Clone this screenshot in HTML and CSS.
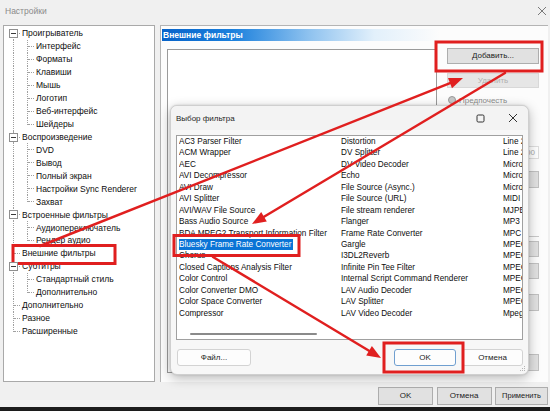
FILE: index.html
```html
<!DOCTYPE html>
<html lang="ru">
<head>
<meta charset="utf-8">
<title>Настройки</title>
<link rel="stylesheet" href="styles.css">
</head>
<body>
<div class="win">
  <div class="titlebar">
    <span class="title">Настройки</span>
    <svg class="wclose" width="10" height="10" viewBox="0 0 10 10"><path d="M1 1L9 9M9 1L1 9" stroke="#7a7a7a" stroke-width="1"/></svg>
  </div>

  <div class="main">
    <div class="tree">
      <div class="r"><span class="c first"><i class="box"></i></span><span class="t">Проигрыватель</span></div>
      <div class="r"><span class="c"></span><span class="c tee"></span><span class="t">Интерфейс</span></div>
      <div class="r"><span class="c"></span><span class="c tee"></span><span class="t">Форматы</span></div>
      <div class="r"><span class="c"></span><span class="c tee"></span><span class="t">Клавиши</span></div>
      <div class="r"><span class="c"></span><span class="c tee"></span><span class="t">Мышь</span></div>
      <div class="r"><span class="c"></span><span class="c tee"></span><span class="t">Логотип</span></div>
      <div class="r"><span class="c"></span><span class="c tee"></span><span class="t">Веб-интерфейс</span></div>
      <div class="r"><span class="c"></span><span class="c end"></span><span class="t">Шейдеры</span></div>
      <div class="r"><span class="c tee"><i class="box"></i></span><span class="t">Воспроизведение</span></div>
      <div class="r"><span class="c"></span><span class="c tee"></span><span class="t">DVD</span></div>
      <div class="r"><span class="c"></span><span class="c tee"></span><span class="t">Вывод</span></div>
      <div class="r"><span class="c"></span><span class="c tee"></span><span class="t">Полный экран</span></div>
      <div class="r"><span class="c"></span><span class="c tee"></span><span class="t">Настройки Sync Renderer</span></div>
      <div class="r"><span class="c"></span><span class="c end"></span><span class="t">Захват</span></div>
      <div class="r"><span class="c tee"><i class="box"></i></span><span class="t">Встроенные фильтры</span></div>
      <div class="r"><span class="c"></span><span class="c tee"></span><span class="t">Аудиопереключатель</span></div>
      <div class="r"><span class="c"></span><span class="c end"></span><span class="t">Рендер аудио</span></div>
      <div class="r"><span class="c tee"></span><span class="t">Внешние фильтры</span></div>
      <div class="r"><span class="c tee"><i class="box"></i></span><span class="t">Субтитры</span></div>
      <div class="r"><span class="c"></span><span class="c tee"></span><span class="t">Стандартный стиль</span></div>
      <div class="r"><span class="c"></span><span class="c end"></span><span class="t">Дополнительно</span></div>
      <div class="r"><span class="c tee"></span><span class="t">Дополнительно</span></div>
      <div class="r"><span class="c tee"></span><span class="t">Разное</span></div>
      <div class="r"><span class="c end"></span><span class="t">Расширенные</span></div>
    </div>

    <div class="page">
      <div class="caption">Внешние фильтры</div>
      <div class="content">
        <div class="filters"></div>
        <div class="side">
          <div class="btn add">Добавить...</div>
          <div class="btn dis">Удалить</div>
          <div class="radio"><i class="dot"></i><span>Предпочесть</span></div>
          <div class="field">00</div>
          <div class="btn s1"></div>
          <div class="hline"></div>
          <div class="btn s2"></div>
          <div class="btn s3"></div>
          <div class="btn s4"></div>
          <div class="btn s5"></div>
        </div>
      </div>
    </div>
  </div>

  <div class="footer">
    <div class="fbtn ok">OK</div>
    <div class="fbtn cancel">Отмена</div>
    <div class="fbtn apply">Применить</div>
  </div>
  <div class="taskbar"></div>

  <div class="dialog">
    <div class="dtitle">
      <span class="dtext">Выбор фильтра</span>
      <svg class="dmax" width="9" height="9" viewBox="0 0 9 9"><rect x="1" y="1" width="7" height="7" rx="1.2" fill="none" stroke="#333" stroke-width="1"/></svg>
      <svg class="dclose" width="10" height="10" viewBox="0 0 10 10"><path d="M1 1L9 9M9 1L1 9" stroke="#333" stroke-width="1"/></svg>
    </div>
    <div class="dbody">
      <div class="list">
        <div class="grid">
          <span>AC3 Parser Filter</span>
          <span>ACM Wrapper</span>
          <span>AEC</span>
          <span>AVI Decompressor</span>
          <span>AVI Draw</span>
          <span>AVI Splitter</span>
          <span>AVI/WAV File Source</span>
          <span>Bass Audio Source</span>
          <span>BDA MPEG2 Transport Information Filter</span>
          <span><b class="sel">Bluesky Frame Rate Converter</b></span>
          <span>Chorus</span>
          <span>Closed Captions Analysis Filter</span>
          <span>Color Control</span>
          <span>Color Converter DMO</span>
          <span>Color Space Converter</span>
          <span>Compressor</span>
          <span>Distortion</span>
          <span>DV Splitter</span>
          <span>DV Video Decoder</span>
          <span>Echo</span>
          <span>File Source (Async.)</span>
          <span>File Source (URL)</span>
          <span>File stream renderer</span>
          <span>Flanger</span>
          <span>Frame Rate Converter</span>
          <span>Gargle</span>
          <span>I3DL2Reverb</span>
          <span>Infinite Pin Tee Filter</span>
          <span>Internal Script Command Renderer</span>
          <span>LAV Audio Decoder</span>
          <span>LAV Splitter</span>
          <span>LAV Video Decoder</span>
          <span>Line 21</span>
          <span>Line 21</span>
          <span>Micro</span>
          <span>Micro</span>
          <span>Micro</span>
          <span>MIDI</span>
          <span>MJPE</span>
          <span>MP3</span>
          <span>MPC</span>
          <span>MPEG</span>
          <span>MPEG</span>
          <span>MPEG</span>
          <span>MPEG</span>
          <span>MPEG</span>
          <span>MPEG</span>
          <span>Mpeg</span>
        </div>
        <div class="hscroll"><i class="thumb"></i></div>
      </div>
      <div class="dbtns">
        <div class="dbtn file">Файл...</div>
        <div class="spacer"></div>
        <div class="dbtn dok">OK</div>
        <div class="dbtn dcancel">Отмена</div>
      </div>
    </div>
    <svg class="grip" width="7" height="7" viewBox="0 0 7 7"><g fill="#b5b5b5"><rect x="5" y="1" width="1" height="1"/><rect x="3" y="3" width="1" height="1"/><rect x="5" y="3" width="1" height="1"/><rect x="1" y="5" width="1" height="1"/><rect x="3" y="5" width="1" height="1"/><rect x="5" y="5" width="1" height="1"/></g></svg>
  </div>

  <svg class="marks" width="550" height="411" viewBox="0 0 550 411">
    <g fill="none" stroke="#e01f1f" stroke-width="3">
      <rect x="13" y="245.5" width="102" height="18"/>
      <rect x="436" y="42" width="106" height="29"/>
      <rect x="174" y="235.5" width="125" height="20"/>
      <rect x="384" y="343" width="79" height="29"/>
    </g>
    <g stroke="#e01f1f" stroke-width="2.5" stroke-linecap="round">
      <line x1="40" y1="246" x2="450" y2="83.2"/>
      <line x1="505" y1="73" x2="264" y2="216.8"/>
      <line x1="213" y1="257" x2="369" y2="350.7"/>
    </g>
    <g fill="#e01f1f">
      <polygon points="463,78 452,88.3 448,78.1"/>
      <polygon points="252,224 266.8,221.5 261.2,212.1"/>
      <polygon points="381,358 371.9,346 366.2,355.4"/>
    </g>
  </svg>
</div>
</body>
</html>
```

FILE: styles.css
```css
* { box-sizing: border-box; }
html, body { margin: 0; padding: 0; }
body {
  width: 550px;
  height: 411px;
  overflow: hidden;
  background: #f0f0f0;
  font-family: "Liberation Sans", Arial, sans-serif;
  color: #111;
}
.win {
  position: relative;
  width: 550px;
  height: 411px;
  display: flex;
  flex-direction: column;
}
.titlebar {
  height: 25px;
  display: flex;
  align-items: center;
  justify-content: space-between;
  padding: 0 3px 4px 5px;
}
.title { font-size: 8.5px; color: #8a8a8a; }
.wclose { display: block; }

.main {
  height: 357px;
  display: flex;
  gap: 5px;
  padding: 0 2px 0 3px;
}
.tree {
  width: 152px;
  flex: none;
  background: #fff;
  border: 1px solid #a9a9a9;
  padding: 1px 0 0 2px;
  font-size: 8.5px;
  color: #0d0d0d;
}
.r {
  display: flex;
  align-items: center;
  height: 12.95px;
  white-space: nowrap;
}
.t { margin-left: 2px; line-height: 12px; }
.c {
  position: relative;
  width: 14px;
  height: 100%;
  flex: none;
}
.c::before {
  content: "";
  position: absolute;
  left: 7px;
  top: 0;
  bottom: 0;
  border-left: 1px dotted #a0a0a0;
}
.c.first::before { top: 6px; }
.c.end::before { bottom: 6px; }
.c.tee::after, .c.end::after, .c.first::after {
  content: "";
  position: absolute;
  left: 8px;
  right: 0;
  top: 6px;
  border-top: 1px dotted #a0a0a0;
}
.box {
  position: absolute;
  left: 3px;
  top: 2px;
  width: 9px;
  height: 9px;
  border: 1px solid #8f8f8f;
  background: #fff;
  z-index: 1;
}
.box::after {
  content: "";
  position: absolute;
  left: 1px;
  right: 1px;
  top: 3px;
  border-top: 1px solid #3a3a3a;
}

.page {
  flex: 1;
  background: #fcfcfc;
  border-top: 1px solid #b4b4b4;
  border-left: 1px solid #b4b4b4;
  padding-top: 3px;
}
.caption {
  margin-left: 1px;
  height: 12px;
  line-height: 12px;
  padding-left: 1px;
  font-size: 8.5px;
  font-weight: bold;
  color: #fff;
  background: linear-gradient(to right, #0763c9 0%, #1a7fdc 18%, #8ec2ef 38%, #e2f0fb 55%, #fcfcfc 72%);
}
.content {
  display: flex;
  margin-top: 7px;
  padding-left: 6px;
}
.filters {
  width: 270px;
  height: 324px;
  margin-top: 1px;
  border: 1px solid #9a9a9a;
  background: #fff;
}
.side {
  width: 92px;
  margin-left: 10px;
  display: flex;
  flex-direction: column;
}
.btn {
  background: #e1e1e1;
  border: 1px solid #c2c2c2;
  font-size: 8px;
  text-align: center;
  color: #222;
}
.add { height: 16px; line-height: 14px; border-color: #adadad; }
.dis { height: 15px; margin-top: 9px; color: #b0b0b0; line-height: 13px; border-color: #d8d8d8; background: #e6e6e6; }
.radio {
  height: 12px;
  margin-top: 6px;
  display: flex;
  align-items: center;
  font-size: 8px;
  color: #8c8c8c;
  padding-left: 1px;
}
.dot {
  width: 8px;
  height: 8px;
  border-radius: 50%;
  border: 1px solid #9a9a9a;
  background: #c8c8c8;
  margin-right: 3px;
}
.field {
  height: 13px;
  margin-top: 40px;
  margin-left: 78px;
  font-size: 8px;
  color: #a8a8a8;
  text-align: right;
  padding-right: 3px;
  line-height: 11px;
  border: 1px solid #dedede;
  background: #fff;
}
.s1 { height: 17px; margin-top: 12px; }
.hline { height: 1px; margin-top: 48px; background: #c9c9c9; }
.s2 { height: 16px; margin-top: 4px; }
.s3 { height: 16px; margin-top: 6px; }
.s4 { height: 17px; margin-top: 15px; }
.s5 { height: 17px; margin-top: 43px; }

.footer {
  height: 25px;
  display: flex;
  justify-content: flex-end;
  align-items: flex-start;
  gap: 3.5px;
  padding: 5px 2px 0 0;
}
.fbtn {
  height: 18px;
  line-height: 16px;
  background: #e1e1e1;
  border: 1px solid #adadad;
  font-size: 8px;
  text-align: center;
  color: #222;
}
.ok { width: 55px; }
.cancel { width: 55px; }
.apply { width: 53px; font-size: 7.5px; }
.taskbar { flex: 1; background: #1c1c1c; }

.dialog {
  position: absolute;
  left: 170px;
  top: 105px;
  width: 359px;
  height: 270px;
  background: #f7f7f7;
  border: 1px solid #cfcfcf;
  border-radius: 7px;
  box-shadow: 0 3px 12px rgba(0, 0, 0, 0.28), 0 0 2px rgba(0, 0, 0, 0.15);
}
.dtitle {
  height: 24px;
  display: flex;
  align-items: center;
  padding: 0 10px 0 5px;
  background: #f3f3f3;
  border-radius: 7px 7px 0 0;
}
.dtext { font-size: 8px; color: #1e1e1e; flex: 1; }
.dmax { display: block; margin-right: 23px; }
.dclose { display: block; }
.dbody { padding: 5px 5px 0 5px; }
.list {
  height: 205px;
  background: #fff;
  border: 1px solid #a0a0a0;
  display: flex;
  flex-direction: column;
  overflow: hidden;
}
.grid {
  display: grid;
  grid-auto-flow: column;
  grid-template-rows: repeat(16, 11.45px);
  grid-template-columns: 162px 162px 20px;
  padding: 0 0 0 2px;
  font-size: 8.2px;
  color: #0d0d0d;
  white-space: nowrap;
}
.grid span { line-height: 11.45px; overflow: hidden; }
.sel {
  font-weight: normal;
  background: #0a74d6;
  color: #fff;
  padding: 0 2px 0 1px;
  margin-left: -1px;
  display: inline-block;
  line-height: 11.45px;
}
.hscroll {
  margin-top: auto;
  height: 7px;
  padding: 1px 0 0 13px;
}
.thumb {
  display: block;
  width: 127px;
  height: 2px;
  background: #8a8a8a;
  border-radius: 1px;
}
.dbtns {
  display: flex;
  gap: 6px;
  margin-top: 9px;
  padding-left: 1px;
}
.spacer { flex: 1; }
.dbtn {
  height: 17px;
  line-height: 15px;
  font-size: 8px;
  text-align: center;
  background: #fdfdfd;
  border: 1px solid #d3d3d3;
  border-radius: 3px;
  color: #1e1e1e;
}
.file { width: 74px; }
.dok { width: 62px; border-color: #6f9fd0; }
.dcancel { width: 61px; }
.grip { position: absolute; right: 2px; bottom: 2px; }

.marks { position: absolute; left: 0; top: 0; pointer-events: none; }
```
